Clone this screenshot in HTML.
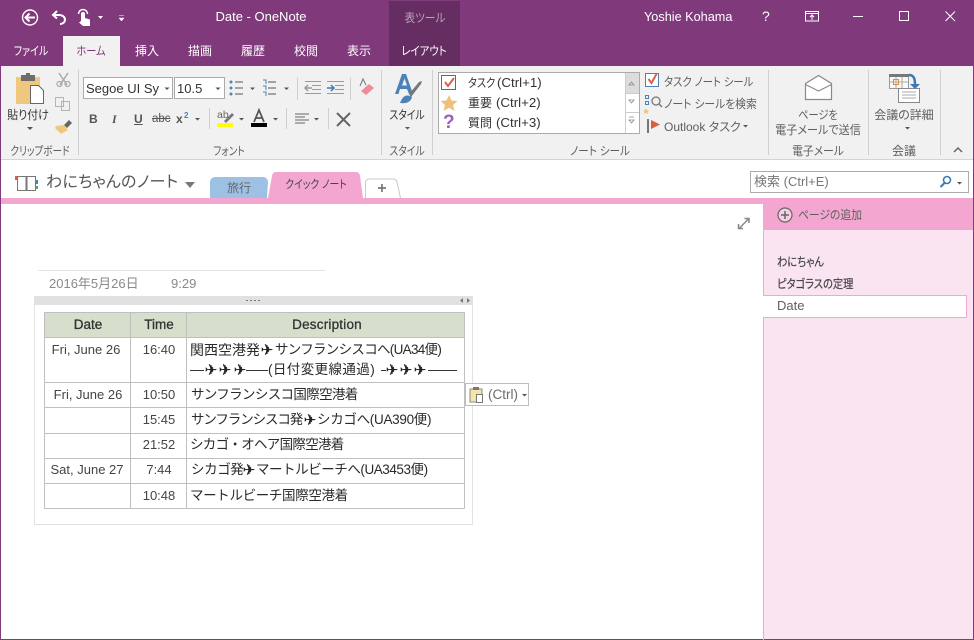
<!DOCTYPE html>
<html lang="ja"><head><meta charset="utf-8"><title>Date - OneNote</title>
<style>
html,body{margin:0;padding:0;background:#fff}
#p{position:relative;width:974px;height:640px;overflow:hidden;background:#fff;font-family:"Liberation Sans","Noto Sans CJK JP",sans-serif;font-size:12px;color:#444}
#p div,#p span.t{position:absolute}
#p span.t{z-index:2}
.t{white-space:nowrap;line-height:16px;font-feature-settings:"palt"}
.w{color:#fff}
.c{transform:translateX(-50%)}
.g{color:#5f5f5f}
.k{color:#333}
.l{transform-origin:0 50%}
#p .cell{font-size:13.5px;color:#2a2a2a;line-height:18px;white-space:nowrap;font-feature-settings:normal}
.n{font-size:13px;color:#444}
#p .pl{font-family:"DejaVu Sans",sans-serif;color:#222;font-size:15px;line-height:16px;font-feature-settings:normal;-webkit-text-stroke:.2px #222}
.h{font-size:13.5px;color:#333;-webkit-text-stroke:.3px #333}
svg{position:absolute;left:0;top:0;z-index:1}
</style></head><body><div id="p">
<div style="left:0;top:0;width:974px;height:66px;background:#80397B"></div>
<div style="left:389px;top:1px;width:71px;height:65px;background:#652D62"></div>
<div style="left:63px;top:36px;width:57px;height:30px;background:#F1F1F1"></div>
<div style="left:0;top:66px;width:974px;height:93px;background:#F1F1F1"></div>
<div style="left:0;top:159px;width:974px;height:1px;background:#D4D4D4"></div>
<div style="left:0;top:198px;width:974px;height:6px;background:#F3A6CF"></div>
<div style="left:763px;top:204px;width:211px;height:436px;background:#FBE4F1"></div>
<div style="left:763px;top:204px;width:211px;height:26px;background:#F3A6CF"></div>
<div style="left:0;top:66px;width:1px;height:574px;background:#80397B"></div>
<div style="left:973px;top:66px;width:1px;height:574px;background:#80397B"></div>
<div style="left:0;top:639px;width:974px;height:1px;background:#80397B"></div>
<div style="left:763px;top:230px;width:1px;height:410px;background:#F3A6CF"></div>
<div style="left:763px;top:295px;width:203px;height:21px;background:#fff;border:1px solid #F3A6CF;border-left:0;box-sizing:content-box"></div>

<span class="t w c" style="left:261px;top:9px;font-size:13px">Date - OneNote</span>
<span class="t c" style="left:425px;top:10px;color:#b9a4b8;transform:translateX(-50%) scaleX(.89)">表ツール</span>
<span class="t w" style="left:644px;top:9px;font-size:12.7px">Yoshie Kohama</span>
<span class="t w" style="left:762px;top:8px;font-size:14px">?</span>
<span class="t w c" style="left:31px;top:43px;transform:translateX(-50%) scaleX(.83)">ファイル</span>
<span class="t c" style="left:90.500px;top:43px;color:#80397B;transform:translateX(-50%) scaleX(.85)">ホーム</span>
<span class="t w c" style="left:147px;top:43px">挿入</span>
<span class="t w c" style="left:200px;top:43px">描画</span>
<span class="t w c" style="left:253px;top:43px">履歴</span>
<span class="t w c" style="left:306px;top:43px">校閲</span>
<span class="t w c" style="left:359px;top:43px">表示</span>
<span class="t w c" style="left:424px;top:43px;transform:translateX(-50%) scaleX(.87)">レイアウト</span>

<span class="t c k" style="left:28px;top:107px;transform:translateX(-50%) scaleX(.91)">貼り付け</span>
<span class="t c g" style="left:40px;top:143px;transform:translateX(-50%) scaleX(.8)">クリップボード</span>
<span class="t c g" style="left:229px;top:143px;transform:translateX(-50%) scaleX(.8)">フォント</span>
<span class="t c g" style="left:407px;top:143px;transform:translateX(-50%) scaleX(.82)">スタイル</span>
<span class="t c g" style="left:600px;top:143px;transform:translateX(-50%) scaleX(.88)">ノート シール</span>
<span class="t c g" style="left:818px;top:143px;transform:translateX(-50%) scaleX(.9)">電子メール</span>
<span class="t c g" style="left:904px;top:143px">会議</span>
<span class="t c k" style="left:407px;top:107px;transform:translateX(-50%) scaleX(.82)">スタイル</span>

<div style="left:83px;top:77px;width:90px;height:22px;background:#fff;border:1px solid #ababab;box-sizing:border-box"></div>
<div style="left:174px;top:77px;width:51px;height:22px;background:#fff;border:1px solid #ababab;box-sizing:border-box"></div>
<span class="t k" style="left:86px;top:81px;font-size:13px">Segoe UI Sy</span>
<span class="t k" style="left:177px;top:81px;font-size:13px">10.5</span>
<span class="t" style="left:89px;top:111px;font-weight:bold;color:#555">B</span>
<span class="t" style="left:112px;top:111px;font-style:italic;font-family:'Liberation Serif',serif;font-weight:bold;color:#555">I</span>
<span class="t" style="left:134px;top:111px;font-weight:bold;color:#555;text-decoration:underline">U</span>
<span class="t" style="left:152px;top:111px;color:#555;text-decoration:line-through;font-size:11.500px">abc</span>
<span class="t" style="left:176px;top:111px;font-weight:bold;color:#555">x</span>
<span class="t" style="left:184px;top:108px;font-size:8px;font-weight:bold;color:#4b82b8">2</span>
<span class="t" style="left:217px;top:107px;font-size:10.500px;color:#666">ab</span>

<div style="left:438px;top:72px;width:202px;height:62px;background:#fff;border:1px solid #ababab;box-sizing:border-box"></div>
<div style="left:625px;top:73px;width:1px;height:60px;background:#ccc"></div>
<div style="left:626px;top:73px;width:13px;height:20px;background:#dcdcdc"></div>
<div style="left:626px;top:93px;width:13px;height:1px;background:#ccc"></div>
<div style="left:626px;top:112px;width:13px;height:1px;background:#ccc"></div>
<span class="t k l" style="left:468px;top:75px;transform:scaleX(.85)">タスク</span>
<span class="t k" style="left:497px;top:75px;font-size:13.300px">(Ctrl+1)</span>
<span class="t k" style="left:468px;top:95px">重要</span>
<span class="t k" style="left:496px;top:95px;font-size:13.300px">(Ctrl+2)</span>
<span class="t k" style="left:468px;top:115px">質問</span>
<span class="t k" style="left:496px;top:115px;font-size:13.300px">(Ctrl+3)</span>
<span class="t" style="left:443px;top:115px;font-size:19px;font-weight:bold;color:#9B5FC0">?</span>
<span class="t g l" style="left:664px;top:74px;transform:scaleX(.864)">タスク ノート シール</span>
<span class="t g l" style="left:664px;top:96px;transform:scaleX(.9)">ノート シールを検索</span>
<span class="t g" style="left:664px;top:119px">Outlook タスク</span>
<span class="t c g" style="left:818px;top:107px;transform:translateX(-50%) scaleX(.85)">ページを</span>
<span class="t c g" style="left:818px;top:122px;transform:translateX(-50%) scaleX(.925)">電子メールで送信</span>
<span class="t c g" style="left:904px;top:107px">会議の詳細</span>

<span class="t" style="left:46px;top:172px;font-size:16px;line-height:22px;color:#555;letter-spacing:.3px">わにちゃんのノート</span>
<span class="t c" style="left:239px;top:180px;color:#666">旅行</span>
<span class="t c" style="left:316px;top:177px;color:#444;font-size:11.500px;transform:translateX(-50%) scaleX(.85)">クイック ノート</span>
<div style="left:750px;top:171px;width:219px;height:22px;background:#fff;border:1px solid #ababab;box-sizing:border-box"></div>
<span class="t" style="left:754px;top:174px;color:#777;font-size:13px">検索 (Ctrl+E)</span>

<span class="t g l" style="left:798px;top:207px;transform:scaleX(.9)">ページの追加</span>
<span class="t l" style="left:777px;top:254px;color:#444;-webkit-text-stroke:.2px #444;transform:scaleX(.85)">わにちゃん</span>
<span class="t l" style="left:777px;top:276px;color:#444;-webkit-text-stroke:.2px #444;transform:scaleX(.855)">ピタゴラスの定理</span>
<span class="t g" style="left:777px;top:298px;font-size:13px">Date</span>

<div style="left:38px;top:270px;width:287px;height:1px;background:#e4e4e4"></div>
<span class="t" style="left:49px;top:276px;color:#8a8a8a;font-size:13px">2016年5月26日</span>
<span class="t" style="left:171px;top:276px;color:#8a8a8a;font-size:13px">9:29</span>
<div style="left:34px;top:296px;width:439px;height:229px;border:1px solid #e2e2e2;box-sizing:border-box"></div>
<div style="left:34px;top:296px;width:439px;height:9px;background:#E1E1E1"></div>
<div style="left:44px;top:312px;width:421px;height:26px;background:#D6DFCC"></div>

<span class="t c h" style="left:88px;top:317px">Date</span>
<span class="t c h" style="left:159px;top:317px">Time</span>
<span class="t c h" style="left:327px;top:317px;letter-spacing:.2px">Description</span>
<span class="t c n" style="left:86px;top:342px">Fri, June 26</span>
<span class="t c n" style="left:159px;top:342px">16:40</span>
<span class="t c n" style="left:88px;top:387px">Fri, June 26</span>
<span class="t c n" style="left:159px;top:387px">10:50</span>
<span class="t c n" style="left:159px;top:412px">15:45</span>
<span class="t c n" style="left:159px;top:437px">21:52</span>
<span class="t c n" style="left:87px;top:462px">Sat, June 27</span>
<span class="t c n" style="left:159px;top:462px">7:44</span>
<span class="t c n" style="left:159px;top:488px">10:48</span>

<span class="t cell" style="left:190px;top:341px;font-size:14px">関西空港発</span>
<span class="t pl c" style="left:267px;top:342px">✈</span>
<span class="t cell" style="left:275px;top:341px;letter-spacing:-.7px">サンフランシスコへ(UA34便)</span>
<span class="t pl c" style="left:211px;top:362px">✈</span>
<span class="t pl c" style="left:225px;top:362px">✈</span>
<span class="t pl c" style="left:240px;top:362px">✈</span>
<span class="t cell" style="left:268px;top:361px;letter-spacing:.4px">(日付変更線通過)</span>
<span class="t pl c" style="left:392px;top:362px">✈</span>
<span class="t pl c" style="left:406px;top:362px">✈</span>
<span class="t pl c" style="left:420px;top:362px">✈</span>
<span class="t cell" style="left:191px;top:386px;letter-spacing:-.65px">サンフランシスコ国際空港着</span>
<span class="t cell" style="left:191px;top:411px;letter-spacing:-1.100px">サンフランシスコ発</span>
<span class="t pl c" style="left:310px;top:412px">✈</span>
<span class="t cell" style="left:317px;top:411px;letter-spacing:-.3px">シカゴへ(UA390便)</span>
<span class="t cell" style="left:190px;top:436px;letter-spacing:-.7px">シカゴ・オヘア国際空港着</span>
<span class="t cell" style="left:191px;top:461px;letter-spacing:-.4px">シカゴ発</span>
<span class="t pl c" style="left:249px;top:462px">✈</span>
<span class="t cell" style="left:256px;top:461px;letter-spacing:-.45px">マートルビーチへ(UA3453便)</span>
<span class="t cell" style="left:190px;top:487px;letter-spacing:-.35px">マートルビーチ国際空港着</span>
<div style="left:465px;top:383px;width:64px;height:23px;background:#fff;border:1px solid #bdbdbd;box-sizing:border-box"></div>
<span class="t" style="left:488px;top:387px;color:#6b6b6b;font-size:13.500px">(Ctrl)</span>

<svg width="974" height="640" viewBox="0 0 974 640" fill="none">
<!-- title icons -->
<circle cx="30" cy="17.500" r="7.500" stroke="#fff" stroke-width="1.400"/>
<path d="M35 17.500H26M29.500 13.500l-4 4 4 4" stroke="#fff" stroke-width="2"/>
<path d="M57 11l-4 4 4 3.500" stroke="#fff" stroke-width="2"/><path d="M54 15h5c3.500 0 6 2 6 4.500S63 24 60 24" stroke="#fff" stroke-width="2"/>
<path d="M81 21V14a2 2 0 0 1 4 0v4l5 1.500V26h-7l-4-3.500z" fill="#fff"/><path d="M78.500 14a4.500 4.500 0 0 1 9 0" stroke="#fff" stroke-width="1.500"/>
<path d="M98 16h5l-2.500 3z" fill="#fff"/><path d="M119 15.500h5M119 18h5l-2.500 3z" fill="#fff" stroke="#fff" stroke-width=".5"/>
<!-- window buttons -->
<path d="M805.500 11.500h13v9.500h-13zM805.500 13.500h13M812 20v-5M810 17l2-2 2 2" stroke="#fff"/>
<path d="M853 16.500h10" stroke="#fff"/>
<rect x="899.500" y="11.500" width="9" height="9" stroke="#fff"/>
<path d="M945.500 11.500l9.500 9.500M955 11.500l-9.500 9.500" stroke="#fff"/>
<!-- ribbon separators -->
<path d="M78.500 70v85M381.500 70v85M432.500 70v85M768.500 70v85M868.500 70v85M940.500 70v85M297.500 78v22M350.500 78v22M209.500 108v21M286.500 108v21M328.500 108v21" stroke="#cfcfcf"/>
<!-- clipboard -->
<rect x="16" y="77" width="24" height="27" fill="#EFC77E"/><rect x="21" y="75" width="14" height="6" fill="#6d6d6d"/><rect x="26" y="73" width="4" height="4" fill="#6d6d6d"/>
<path d="M30.500 85.500h8l5 5v13h-13z" fill="#fff" stroke="#666"/>
<path d="M59 73l8 12M68 73l-8 12" stroke="#aaa" stroke-width="1.500"/><circle cx="59.500" cy="84" r="2.500" stroke="#aaa" stroke-width="1.200"/><circle cx="67.500" cy="84" r="2.500" stroke="#aaa" stroke-width="1.200"/>
<path d="M55.500 97.500h8v9h-8zM61.500 101.500h8v9h-8z" stroke="#b5b5b5" fill="#f1f1f1"/>
<path d="M69 120l3 3-5 5-3-3z" fill="#666"/><path d="M56 126l8-1 4 5-7 4-6-6z" fill="#EFC77E"/>
<!-- small carets -->
<path d="M27 127h6l-3 3zM164.500 87.500h5l-2.500 2.500zM215.500 87.500h5l-2.500 2.500zM250 87.500h5l-2.500 2.500zM284 87.500h5l-2.500 2.500zM195 118h5l-2.500 2.500zM239 118h5l-2.500 2.500zM273 118h5l-2.500 2.500zM314 118h5l-2.500 2.500zM405 127h5l-2.500 2.500zM743 125h5l-2.500 2.500zM905 127h5l-2.500 2.500zM957 182h5l-2.500 2.500zM522 394h5l-2.500 2.500z" fill="#555"/>
<!-- bullets -->
<circle cx="231" cy="82" r="1.500" fill="#4b82b8"/><circle cx="231" cy="88" r="1.500" fill="#4b82b8"/><circle cx="231" cy="94" r="1.500" fill="#4b82b8"/>
<path d="M235 82h8M235 88h8M235 94h8M268 82h8M268 88h8M268 94h8" stroke="#555"/>
<path d="M263 80h3v4M263 86h3v4M263 92h3v4" stroke="#4b82b8"/>
<path d="M305 81.500h16M312 85.500h9M312 89.500h9M305 93.500h16M327 81.500h17M335 85.500h9M335 89.500h9M327 93.500h17" stroke="#9a9a9a"/>
<path d="M305 88h7M308 85l-3 3 3 3" stroke="#9a9a9a" stroke-width="1.500"/><path d="M327 88h7M331 85l3 3-3 3" stroke="#3b78b5" stroke-width="1.500"/>
<path d="M361 91l8-7 5 4-8 7z" fill="#EE8C99"/><path d="M360 86l3-7 3 6" stroke="#777"/>
<!-- highlight & font colour -->
<path d="M224 121l8-8 2 2-8 8z" fill="#777"/><rect x="217" y="123" width="16" height="4" fill="#FFFF00"/>
<path d="M254 122l5-12 5 12M256 118h6" stroke="#555" stroke-width="1.700"/><rect x="251" y="123" width="16" height="4" fill="#000"/>
<path d="M295 114h14M295 117h10M295 120h14M295 123h10" stroke="#666"/>
<path d="M337 113l13 13M350 113l-13 13" stroke="#666" stroke-width="2"/>
<!-- styles A -->
<path fill-rule="evenodd" d="M395 94l7-20h4l7 20h-4l-2-5h-7l-1.500 5zM402 85.500h5l-2.500-7z" fill="#4B82B8"/>
<path d="M409 94l10-12 3-1-1 3-10 13z" fill="#777"/><path d="M400 103c3-8 7-9 12-6-1 5-6 7-12 6z" fill="#4B82B8"/>
<!-- note tags -->
<rect x="441.500" y="75.500" width="14" height="14" stroke="#4B6E96" fill="#fff"/>
<path d="M445 82l3 4 6-8" stroke="#D9604A" stroke-width="2"/>
<path d="M449 95l2.500 5.500 6 .5-4.500 4 1.500 6-5.500-3.300-5.500 3.300 1.500-6-4.500-4 6-.5z" fill="#EFC077"/>
<path d="M629 85h5l-2.500-3zM629 100h5l-2.500 3zM629 117h5M629 120h5l-2.500 3z" stroke="#8a8a8a" stroke-width=".8"/>
<rect x="645.500" y="73.500" width="13" height="13" fill="#fff" stroke="#4B82B8"/><path d="M648.500 79l3 4 5-9" stroke="#D9604A" stroke-width="2"/>
<path d="M645.500 95.500h3v3h-3zM645.500 101.500h3v3h-3z" stroke="#4B82B8"/><circle cx="656" cy="101" r="4" stroke="#777" stroke-width="1.300"/><path d="M659 104l3 3" stroke="#777" stroke-width="1.500"/>
<path d="M646 108l1 2.500h2l-1.500 1.500.5 2-2-1.200-2 1.200.5-2-1.500-1.500h2z" fill="#EFC077"/>
<path d="M648 119v14" stroke="#777" stroke-width="2"/><path d="M651 120l9 4.500-9 4.500z" fill="#D9603F"/>
<!-- mail -->
<path d="M805.500 83.500l13-8 13 8v16h-26z" fill="#fff" stroke="#8a8a8a" stroke-width="1.200"/><path d="M805.500 84.500l13 6.500 13-6.500" stroke="#8a8a8a" stroke-width="1.200"/>
<!-- meeting -->
<rect x="889.500" y="74.500" width="19" height="14" fill="#f8f8f8" stroke="#999"/><rect x="889" y="74" width="20" height="3" fill="#777"/><path d="M896 77v11M902 77v11M890 82h18" stroke="#aaa"/><rect x="893.500" y="79.500" width="5" height="5" stroke="#E08A3C"/>
<rect x="898.500" y="88.500" width="21" height="14" fill="#fff" stroke="#888"/><path d="M902 92h14M902 95h14M902 98h14" stroke="#aaa"/>
<path d="M909 75c5 0 6 4 6 9" stroke="#3b78b5" stroke-width="2.500"/><path d="M910 84h10l-5 5z" fill="#3b78b5"/>
<path d="M954 152l4-4 4 4" stroke="#666" stroke-width="1.500"/>
<!-- notebook -->
<path d="M17.500 176.500h8.500v14h-8.500zM27 176.500h8.500v14H27z" stroke="#777"/><rect x="15" y="176" width="2" height="4" fill="#D9603F"/><rect x="36" y="180" width="2" height="4" fill="#4B82B8"/><rect x="36" y="186" width="2" height="3" fill="#5f9f6f"/>
<path d="M185 182h10l-5 6z" fill="#777"/>
<!-- section tabs -->
<path d="M210 198v-16a5 5 0 0 1 5-5h48a5 5 0 0 1 5 5l-1 16z" fill="#9CC1E4"/>
<path d="M268 198l4-22a4 4 0 0 1 4-4h80a4 4 0 0 1 4 4l3 22z" fill="#F3A6CF"/>
<path d="M365.500 198v-15q0-4 4-4h23q4 0 4.500 3l3.500 16" fill="#fff" stroke="#c8c8c8"/>
<path d="M382 184v8M378 188h8" stroke="#777" stroke-width="1.700"/>
<!-- search -->
<circle cx="947" cy="180" r="3.500" stroke="#3b78b5" stroke-width="1.600"/><path d="M944.500 183l-4 4" stroke="#3b78b5" stroke-width="2"/>
<!-- expand -->
<path d="M739.500 228l9-9M744.500 218.500h4.500v4.500M743 228.500h-4.500v-4.500" stroke="#888" stroke-width="1.500"/>
<!-- add page -->
<circle cx="785" cy="215" r="7" fill="#f6cfe4" stroke="#666" stroke-width="1.200"/><path d="M785 211v8M781 215h8" stroke="#666" stroke-width="1.500"/>
<!-- handle -->
<path d="M246 300.500h2M250 300.500h2M254 300.500h2M258 300.500h2" stroke="#777"/><path d="M463 298l-3 2.500 3 2.500zM467 298l3 2.500-3 2.500z" fill="#777"/>
<!-- table grid -->
<path d="M44.500 312.500h420M44.500 337.500h420M44.500 382.500h420M44.500 407.500h420M44.500 433.500h420M44.500 458.500h420M44.500 483.500h420M44.500 508.500h420M44.500 312.500v196M130.500 312.500v196M186.500 312.500v196M464.500 312.500v196" stroke="#bfbfbf"/>
<!-- long dashes in row 1 -->
<path d="M190 370.500h14M246 370.500h22M381 370.500h5M428 370.500h29" stroke="#333"/>
<!-- paste icon -->
<rect x="470" y="389" width="12" height="13" fill="#F5E6A8" stroke="#8a8a8a"/><rect x="473" y="387" width="6" height="3" fill="#777"/><path d="M476.500 394.500h6v8h-6z" fill="#fff" stroke="#777"/>
</svg>
</div></body></html>
